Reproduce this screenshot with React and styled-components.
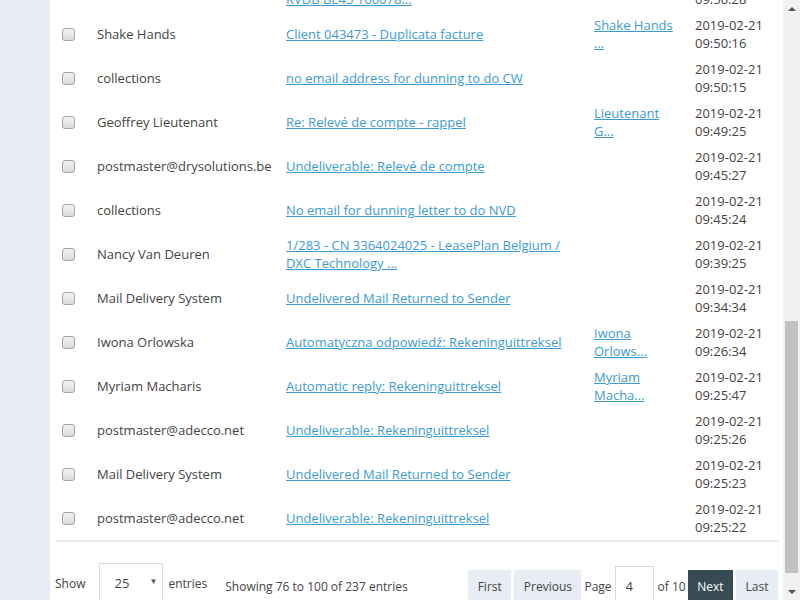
import React, { useLayoutEffect, useRef, useState } from 'react';
import styled, { createGlobalStyle } from 'styled-components';

const GlobalStyle = createGlobalStyle`
  html, body {
    margin: 0;
    height: 100%;
    overflow: hidden;
  }
  body {
    font-family: 'Open Sans', 'Liberation Sans', sans-serif;
    font-size: 13px;
    color: #444;
  }
`;

const Screen = styled.div`
  display: flex;
  height: 100vh;
`;

const Viewport = styled.div`
  flex: 1;
  min-width: 0;
  overflow-y: scroll;
  scrollbar-width: none;
  background: #e8ecf4;
`;

const ScrollBar = styled.div`
  display: flex;
  flex-direction: column;
  width: 17px;
  flex-shrink: 0;
  background: #f1f1f1;
`;

const ScrollArrow = styled.div`
  display: flex;
  align-items: center;
  justify-content: center;
  height: 17px;
  flex-shrink: 0;

  &::after {
    content: '';
    border-left: 4px solid transparent;
    border-right: 4px solid transparent;
    border-${(p) => (p.$down ? 'top' : 'bottom')}: 4px solid #505050;
  }
`;

const ScrollTrack = styled.div`
  flex: 1;
  padding: 0 2px;
`;

const ScrollThumb = styled.div`
  background: #c1c1c1;
`;

const Panel = styled.div`
  margin-left: 50px;
  background: #fff;
  padding: 20px 5px 19px;
`;

const Title = styled.h2`
  margin: 0 0 20px;
  padding: 0 8px;
  font-size: 20px;
  font-weight: 400;
  line-height: 30px;
  color: #364b54;
`;

const Toolbar = styled.div`
  display: flex;
  align-items: center;
  gap: 8px;
  height: 34px;
  margin-bottom: 16px;
  padding: 0 8px;
`;

const SearchBox = styled.input`
  width: 220px;
  height: 32px;
  box-sizing: border-box;
  border: 1px solid #ddd;
  padding: 0 10px;
  font: inherit;
  color: #444;
`;

const Table = styled.table`
  width: 100%;
  table-layout: fixed;
  border-collapse: collapse;
  border-bottom: 2px solid #e5e9ef;
`;

const HeadCell = styled.th`
  height: 44px;
  padding: 0 8px;
  text-align: left;
  font-weight: 600;
  color: #364b54;
  border-bottom: 2px solid #e5e9ef;
`;

const Row = styled.tr`
  height: 44px;
`;

const Cell = styled.td`
  padding: 4px 8px;
  line-height: 18px;
  vertical-align: middle;
  overflow-wrap: break-word;
  white-space: ${(p) => (p.$nowrap ? 'nowrap' : 'normal')};
`;

const Check = styled.input.attrs({ type: 'checkbox' })`
  appearance: none;
  display: block;
  width: 13px;
  height: 13px;
  margin: 0 0 0 -1px;
  border: 1px solid #a4a4a4;
  border-radius: 3px;
  box-sizing: border-box;
  background: linear-gradient(#f2f2f2, #dcdcdc);
`;

const Link = styled.a`
  color: #3d9bd2;
  text-decoration: underline;
  white-space: pre-line;
  cursor: pointer;
`;

const Footer = styled.div`
  display: flex;
  align-items: flex-start;
  padding-top: 21px;
  font-size: 12px;
`;

const Length = styled.div`
  display: flex;
  align-items: center;
  height: 40px;
`;

const Select = styled.div`
  display: flex;
  align-items: center;
  justify-content: space-between;
  width: 64px;
  height: 40px;
  box-sizing: border-box;
  border: 1px solid #dcdcdc;
  padding: 0 5px 0 14px;
  margin: 0 5px 0 14px;
  font-size: 13px;
`;

const Caret = styled.span`
  font-size: 8px;
  color: #555;
  margin-top: -5px;
`;

const Info = styled.div`
  margin: 15px 0 0 18px;
  line-height: 18px;
`;

const Pager = styled.div`
  display: flex;
  align-items: center;
  gap: 3px;
  height: 40px;
  margin: 3px 0 0 auto;
`;

const PageButton = styled.button`
  height: 32px;
  padding: 0 9.5px;
  border: 0;
  font: inherit;
  color: ${(p) => (p.$active ? '#fff' : '#444')};
  background: ${(p) => (p.$active ? '#364b54' : '#e8ecf4')};
  cursor: pointer;
`;

const PageLabel = styled.span`
  margin: 0 ${(p) => p.$right || 0}px 0 ${(p) => p.$left || 0}px;
`;

const PageInput = styled.input`
  width: 39px;
  height: 40px;
  box-sizing: border-box;
  border: 1px solid #dcdcdc;
  padding: 0 10px;
  font: inherit;
  font-size: 13px;
  color: #444;
`;

const emails = [
  ['Mail Delivery System', 'Undelivered Mail Returned to Sender', '', '2019-02-21 10:12:40'],
  ['collections', 'No email for dunning letter to do BKV', '', '2019-02-21 10:11:02'],
  ['Sophie Janssens', 'RE: Herinnering openstaande facturen', 'Sophie Jans...', '2019-02-21 10:08:51'],
  ['postmaster@adecco.net', 'Undeliverable: Rekeninguittreksel', '', '2019-02-21 10:05:13'],
  ['Shake Hands', 'Client 043470 - Duplicata facture', 'Shake Hands ...', '2019-02-21 10:02:37'],
  ['collections', 'no email address for dunning to do MV', '', '2019-02-21 09:59:44'],
  ['Marc Peeters', 'Automatic reply: Relevé de compte', 'Marc Peeters', '2019-02-21 09:58:20'],
  ['Mail Delivery System', 'Undelivered Mail Returned to Sender', '', '2019-02-21 09:57:09'],
  ['postmaster@drysolutions.be', 'Undeliverable: Rekeninguittreksel', '', '2019-02-21 09:55:31'],
  ['collections', 'No email for dunning letter to do KVDB', '', '2019-02-21 09:54:18'],
  ['An De Smet', 'Re: Relevé de compte - rappel', 'An De Smet', '2019-02-21 09:52:46'],
  ['collections', 'no email address for dunning to do LS', '', '2019-02-21 09:51:03'],
  ['Isabelle Claes', 'Betalingsherinnering factuur 2019-0187\nKVDB BE45 100078...', '', '2019-02-21 09:50:28'],
  ['Shake Hands', 'Client 043473 - Duplicata facture', 'Shake Hands ...', '2019-02-21 09:50:16'],
  ['collections', 'no email address for dunning to do CW', '', '2019-02-21 09:50:15'],
  ['Geoffrey Lieutenant', 'Re: Relevé de compte - rappel', 'Lieutenant G...', '2019-02-21 09:49:25'],
  ['postmaster@drysolutions.be', 'Undeliverable: Relevé de compte', '', '2019-02-21 09:45:27'],
  ['collections', 'No email for dunning letter to do NVD', '', '2019-02-21 09:45:24'],
  [
    'Nancy Van Deuren',
    '1/283 - CN 3364024025 - LeasePlan Belgium / DXC Technology ...',
    '',
    '2019-02-21 09:39:25',
  ],
  ['Mail Delivery System', 'Undelivered Mail Returned to Sender', '', '2019-02-21 09:34:34'],
  ['Iwona Orlowska', 'Automatyczna odpowiedź: Rekeninguittreksel', 'Iwona Orlows...', '2019-02-21 09:26:34'],
  ['Myriam Macharis', 'Automatic reply: Rekeninguittreksel', 'Myriam Macha...', '2019-02-21 09:25:47'],
  ['postmaster@adecco.net', 'Undeliverable: Rekeninguittreksel', '', '2019-02-21 09:25:26'],
  ['Mail Delivery System', 'Undelivered Mail Returned to Sender', '', '2019-02-21 09:25:23'],
  ['postmaster@adecco.net', 'Undeliverable: Rekeninguittreksel', '', '2019-02-21 09:25:22'],
];

const EmailRow = ({ from, subject, to, date }) => (
  <Row>
    <Cell>
      <Check />
    </Cell>
    <Cell $nowrap>{from}</Cell>
    <Cell>
      <Link>{subject}</Link>
    </Cell>
    <Cell>{to && <Link>{to}</Link>}</Cell>
    <Cell>{date}</Cell>
  </Row>
);

const App = () => {
  const viewportRef = useRef(null);
  const tableRef = useRef(null);
  const [thumb, setThumb] = useState({ top: 0, height: 0 });

  // keep the table's bottom edge where it sits in the reference view,
  // then size the scrollbar thumb from the scroll metrics
  useLayoutEffect(() => {
    const view = viewportRef.current;
    const table = tableRef.current;
    const bottom = table.getBoundingClientRect().bottom + view.scrollTop;
    view.scrollTop = bottom - 542;
    const track = view.clientHeight - 34;
    setThumb({
      top: (view.scrollTop / view.scrollHeight) * track,
      height: (view.clientHeight / view.scrollHeight) * track,
    });
  }, []);

  return (
    <>
      <GlobalStyle />
      <Screen>
        <Viewport ref={viewportRef}>
          <Panel>
            <Title>Incoming emails</Title>
            <Toolbar>
              <SearchBox placeholder="Search..." />
            </Toolbar>
            <Table ref={tableRef}>
              <colgroup>
                <col style={{ width: 34 }} />
                <col style={{ width: 189 }} />
                <col style={{ width: 308 }} />
                <col style={{ width: 101 }} />
                <col style={{ width: 91 }} />
              </colgroup>
              <thead>
                <tr>
                  <HeadCell>
                    <Check />
                  </HeadCell>
                  <HeadCell>From</HeadCell>
                  <HeadCell>Subject</HeadCell>
                  <HeadCell>To</HeadCell>
                  <HeadCell>Date</HeadCell>
                </tr>
              </thead>
              <tbody>
                {emails.map(([from, subject, to, date], i) => (
                  <EmailRow key={i} from={from} subject={subject} to={to} date={date} />
                ))}
              </tbody>
            </Table>
            <Footer>
              <Length>
                Show
                <Select>
                  25 <Caret>▼</Caret>
                </Select>
                entries
              </Length>
              <Info>Showing 76 to 100 of 237 entries</Info>
              <Pager>
                <PageButton>First</PageButton>
                <PageButton>Previous</PageButton>
                <PageLabel>Page</PageLabel>
                <PageInput defaultValue="4" />
                <PageLabel $left={1} $right={-1}>
                  of 10
                </PageLabel>
                <PageButton $active>Next</PageButton>
                <PageButton>Last</PageButton>
              </Pager>
            </Footer>
          </Panel>
        </Viewport>
        <ScrollBar>
          <ScrollArrow />
          <ScrollTrack>
            <ScrollThumb style={{ marginTop: thumb.top, height: thumb.height }} />
          </ScrollTrack>
          <ScrollArrow $down />
        </ScrollBar>
      </Screen>
    </>
  );
};

export default App;
